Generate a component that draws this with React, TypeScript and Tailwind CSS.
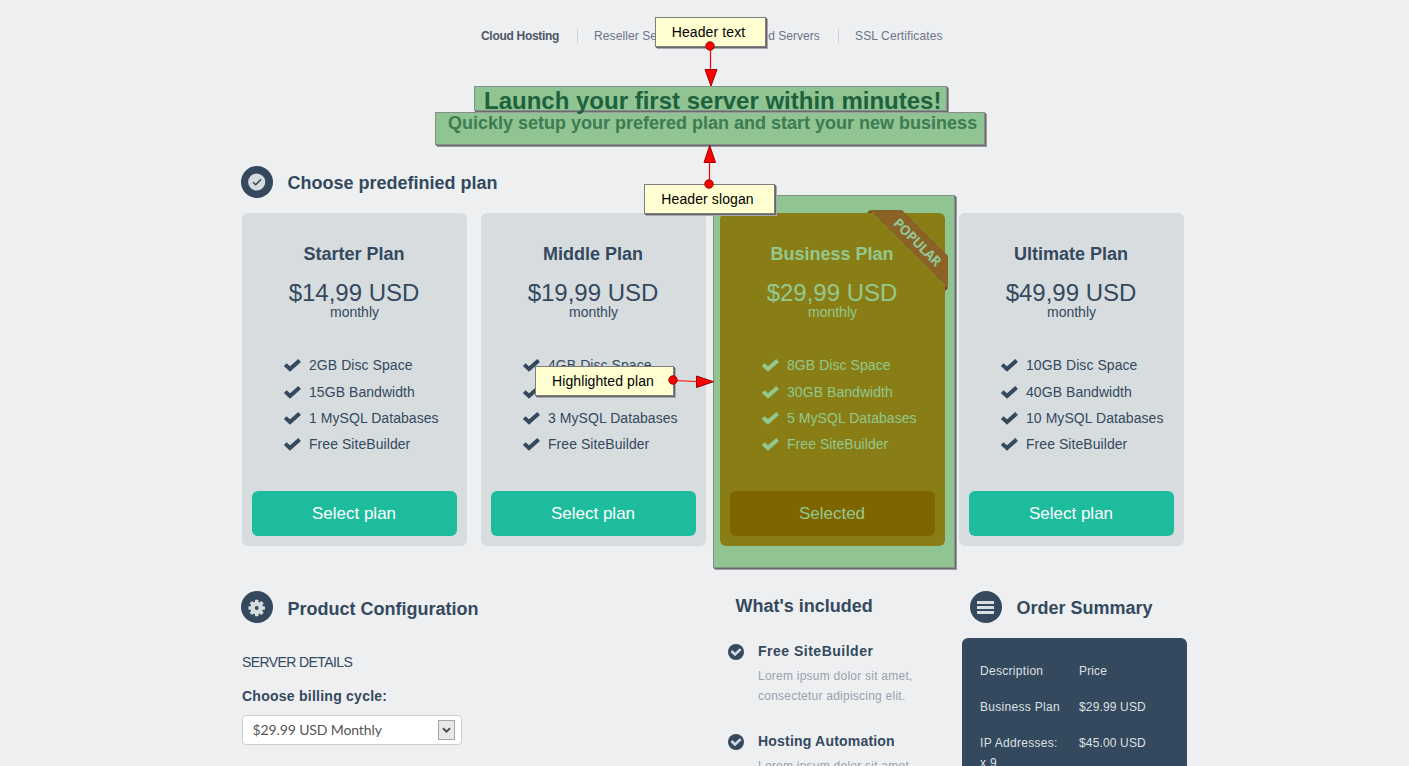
import React from "react";

type Plan = { name: string; price: string; features: string[]; popular?: boolean };

const plans: Plan[] = [
  { name: "Starter Plan", price: "$14,99 USD", features: ["2GB Disc Space", "15GB Bandwidth", "1 MySQL Databases", "Free SiteBuilder"] },
  { name: "Middle Plan", price: "$19,99 USD", features: ["4GB Disc Space", "20GB Bandwidth", "3 MySQL Databases", "Free SiteBuilder"] },
  { name: "Business Plan", price: "$29,99 USD", features: ["8GB Disc Space", "30GB Bandwidth", "5 MySQL Databases", "Free SiteBuilder"], popular: true },
  { name: "Ultimate Plan", price: "$49,99 USD", features: ["10GB Disc Space", "40GB Bandwidth", "10 MySQL Databases", "Free SiteBuilder"] },
];

const included = [
  { title: "Free SiteBuilder", wide: "tracking-[0.5px]" },
  { title: "Hosting Automation", wide: "tracking-[0.2px]" },
];

const order = [
  ["Description", "Price"],
  ["Business Plan", "$29.99 USD"],
  ["IP Addresses: x 9", "$45.00 USD"],
];

function Check() {
  return (
    <svg width="18" height="14" viewBox="0 0 18 14" className="shrink-0">
      <path d="M2.200 6.600 7 11 16.600 2.400" fill="none" stroke="currentColor" strokeWidth="4" />
    </svg>
  );
}

function Badge({ kind }: { kind: "check" | "gear" | "menu" }) {
  return (
    <svg width="32" height="32" viewBox="0 0 32 32" className="shrink-0">
      <circle cx="16" cy="16" r="16" fill="#34495e" />
      {kind === "check" && (
        <>
          <circle cx="15.7" cy="16" r="8.6" fill="#d6dbde" />
          <path d="M12 16.2 14.7 18.8 20 13.4" fill="none" stroke="#34495e" strokeWidth="1.5" />
        </>
      )}
      {kind === "gear" && (
        <>
          <g fill="#d6dbde">
            <circle cx="15.7" cy="17" r="6.300" />
            <rect x="13.900" y="8.700" width="3.600" height="16.600" rx="0.800" />
            <rect x="13.900" y="8.700" width="3.600" height="16.600" rx="0.800" transform="rotate(45 15.7 17)" />
            <rect x="13.900" y="8.700" width="3.600" height="16.600" rx="0.800" transform="rotate(90 15.7 17)" />
            <rect x="13.900" y="8.700" width="3.600" height="16.600" rx="0.800" transform="rotate(135 15.7 17)" />
          </g>
          <circle cx="15.7" cy="17" r="1.900" fill="#34495e" />
        </>
      )}
      {kind === "menu" && <path d="M7 10h17v3H7zM7 15h17v3H7zM7 20h17v3H7z" fill="#d6dede" />}
    </svg>
  );
}

function Ribbon() {
  return (
    <svg width="84" height="84" viewBox="865 208 84 84" className="absolute left-[145px] -top-[5px]">
      <path d="M867 213 870 210 873 213zM945 285 948 288 945 291z" fill="#6e4a12" />
      <path d="M870 210H902L948 256V288z" fill="#8b6225" />
      <text x="917.5" y="247" textAnchor="middle" transform="rotate(45 917.5 242)" fill="#93c896" className="font-['Open_Sans',sans-serif] text-[13.5px] font-bold tracking-[-0.4px]">
        POPULAR
      </text>
    </svg>
  );
}

function PlanCard({ plan }: { plan: Plan }) {
  const hot = plan.popular;
  return (
    <div className="relative h-[333px] w-[225px]">
      {hot && (
        <div className="absolute -top-[18px] -left-[7px] h-[373px] w-[242px] border border-[#85908a] bg-[#90c493] shadow-[1px_1px_0_#6a6a6e,2px_2px_0_#9c9ca0]" />
      )}
      <div className={`relative flex h-full flex-col items-center rounded-[6px] pt-[29px] pb-[10px] ${hot ? "bg-[#897d16] text-[#93c98f]" : "bg-[#d7dcde] text-[#34495e]"}`}>
        <h3 className="pr-px text-[18px] leading-6 font-bold">{plan.name}</h3>
        <div className="mt-[15px] pr-px text-2xl leading-[23px]">{plan.price}</div>
        <div className="text-sm leading-4">monthly</div>
        <ul className="mt-[32.3px] w-full pl-[40.5px] text-sm tracking-[0.06px]">
          {plan.features.map((f) => (
            <li key={f} className="flex h-[26.3px] items-center gap-[8.5px] whitespace-nowrap">
              <Check />
              {f}
            </li>
          ))}
        </ul>
        <button className={`mt-auto h-[45px] w-[205px] rounded-[6px] pr-px text-[17px] ${hot ? "bg-[#7f6500]" : "bg-[#1dbc9c] text-white"}`}>
          {hot ? "Selected" : "Select plan"}
        </button>
      </div>
      {hot && <Ribbon />}
    </div>
  );
}

const note = "absolute flex items-center justify-center border border-[#7d7d7d] bg-[#ffffd2] text-sm tracking-[0.1px] text-black shadow-[1px_1px_0_#68686c,2px_2px_0_#a8a8ac]";

function Annotations() {
  return (
    <>
      <div className={`${note} left-[655px] top-[17px] z-20 h-[30px] w-[111px] pr-[4px]`}>Header text</div>
      <div className={`${note} left-[644px] top-[184px] z-20 h-[30px] w-[131px] pr-[4px]`}>Header slogan</div>
      <div className={`${note} left-[535px] top-[366px] z-20 h-[30px] w-[139px] pr-[3px]`}>Highlighted plan</div>
      <svg width="1409" height="766" className="pointer-events-none absolute inset-0 z-30" fill="#ff0000" stroke="#990000">
        <path d="M710.5 46V70M709.5 184V162M673 380.5 697 381.5" stroke="#ff0000" strokeWidth="1.2" />
        <path d="M705 69.5H717L711 86zM704 162.5H715.5L709.7 145.5zM696.5 376V387.500L713.500 381.700z" />
        <circle cx="710" cy="46" r="4.2" />
        <circle cx="709" cy="184" r="4.2" />
        <circle cx="673" cy="380" r="4.2" />
      </svg>
    </>
  );
}

export default function App() {
  return (
    <div className="relative h-[766px] w-[1409px] overflow-hidden bg-[#eeeff1] font-['Liberation_Sans',Arial,sans-serif] text-[#34495e]">
      <nav className="flex h-[86px] items-start pt-[28px] pl-[481px] text-xs leading-4 text-[#6b7489]">
        <span className="w-[96px] font-bold tracking-[-0.3px] whitespace-nowrap text-[#4b5667]">Cloud Hosting</span>
        <span className="mt-px h-[14px] w-px bg-[#ccd0d4]" />
        <span className="w-[129px] pl-[16px] tracking-[0.1px] whitespace-nowrap">Reseller Servers</span>
        <span className="w-[131px] pl-[14px] whitespace-nowrap">Dedicated Servers</span>
        <span className="mt-px h-[14px] w-px bg-[#ccd0d4]" />
        <span className="pl-[16px] tracking-[0.13px] whitespace-nowrap">SSL Certificates</span>
      </nav>

      <header className="h-[80px]">
        <div className="relative z-20 ml-[474px] h-[26px] w-[473px]">
          <div className="absolute inset-x-0 top-0 h-[25px] border border-[#85908a] bg-[#90c493] shadow-[1px_1px_0_#6a6a6e,2px_2px_0_#9c9ca0]" />
          <h1 className="relative pl-[10px] text-2xl leading-[30px] font-bold whitespace-nowrap text-[#1e613d]">Launch your first server within minutes!</h1>
        </div>
        <div className="relative z-10 ml-[435px] h-[33px] w-[550px] border border-[#85908a] bg-[#90c493] shadow-[1px_1px_0_#6a6a6e,2px_2px_0_#9c9ca0]">
          <h2 className="pl-[12px] text-[18px] leading-5 font-bold whitespace-nowrap text-[#3d7b50]">Quickly setup your prefered plan and start your new business</h2>
        </div>
      </header>

      <section className="pl-[241px]">
        <div className="flex h-[47px] items-start gap-[14.5px]">
          <Badge kind="check" />
          <h2 className="text-[18px] leading-[34px] font-bold">Choose predefinied plan</h2>
        </div>
        <div className="flex gap-[14px] pl-px">
          {plans.map((p) => (
            <PlanCard key={p.name} plan={p} />
          ))}
        </div>
      </section>

      <main className="flex pt-[45px] pl-[241px]">
        <section className="w-[487px]">
          <div className="flex h-[64px] items-start gap-[14.5px]">
            <Badge kind="gear" />
            <h2 className="text-[18px] leading-[36px] font-bold">Product Configuration</h2>
          </div>
          <div className="pl-px">
            <div className="text-sm leading-[14px] tracking-[-0.6px]">SERVER DETAILS</div>
            <div className="mt-[19px] text-sm leading-[16px] font-bold tracking-[0.25px]">Choose billing cycle:</div>
            <div className="mt-[11px] flex h-[30px] w-[220px] items-center justify-between rounded-[4px] border border-[#ccc] bg-white pr-[6px] pl-[9.5px] font-['Lato',sans-serif] text-sm tracking-[-0.12px] text-[#555]">
              $29.99 USD Monthly
              <span className="flex h-5 w-[17px] items-center justify-center border border-[#a5a5a5] bg-[#e8e8e8]">
                <svg width="9" height="7" viewBox="0 0 9 7">
                  <path d="M1 1.200 4.500 4.700 8 1.200" fill="none" stroke="#4d4d4d" strokeWidth="2" />
                </svg>
              </span>
            </div>
          </div>
        </section>

        <section className="w-[234px]">
          <h2 className="h-[52px] pl-[7.5px] text-[18px] leading-[30px] font-bold">What's included</h2>
          {included.map((item) => (
            <div key={item.title} className="flex h-[90px] gap-[14px]">
              <svg width="16" height="16" viewBox="0 0 16 16" className="mt-px shrink-0">
                <circle cx="8" cy="8" r="8" fill="#34495e" />
                <path d="M3.400 7 7 10.400 12.700 5.100" fill="none" stroke="#d6dbde" strokeWidth="2.600" />
              </svg>
              <div>
                <h3 className={`text-sm leading-4 font-bold whitespace-nowrap ${item.wide}`}>{item.title}</h3>
                <p className="mt-[7px] w-[170px] text-xs leading-5 tracking-[0.24px] text-[#9a9fae]">Lorem ipsum dolor sit amet, consectetur adipiscing elit.</p>
              </div>
            </div>
          ))}
        </section>

        <section>
          <div className="flex h-[47px] items-start gap-[14.5px] pl-[8px]">
            <Badge kind="menu" />
            <h2 className="text-[18px] leading-[34px] font-bold">Order Summary</h2>
          </div>
          <div className="h-[150px] w-[225px] rounded-t-[6px] bg-[#34495e] pt-[23px] pl-[18px] text-xs leading-5 text-[#dce0e3]">
            {order.map(([a, b]) => (
              <div key={a} className="flex min-h-[36px]">
                <span className="w-[99px] pr-[14px] tracking-[0.3px]">{a}</span>
                <span className="tracking-[0.15px]">{b}</span>
              </div>
            ))}
          </div>
        </section>
      </main>
      <Annotations />
    </div>
  );
}
